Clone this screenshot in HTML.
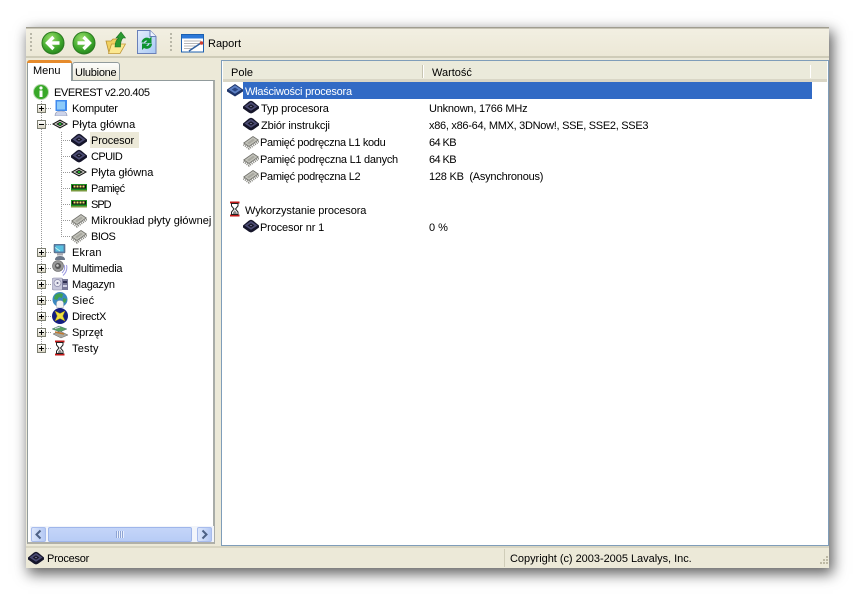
<!DOCTYPE html>
<html><head><meta charset="utf-8">
<style>
html,body{margin:0;padding:0;background:#fff;width:855px;height:594px;overflow:hidden}
body{position:relative;font:11px "Liberation Sans",sans-serif;color:#000}
div,span,svg{position:absolute;box-sizing:border-box}
#win{left:26px;top:27px;width:803px;height:541px;background:#ece9d8;box-shadow:3px 5px 13px 1px rgba(0,0,0,.62)}
.t{white-space:nowrap;line-height:14px;height:14px;margin-top:1px}
.g{width:2px;height:20px;background:repeating-linear-gradient(#b9b7a8 0 2px,transparent 2px 4px)}
.pm{width:9px;height:9px;border:1px solid #7b7d70;background:linear-gradient(#fff,#d9d5c4)}
.pm:before{content:"";position:absolute;left:1px;top:3px;width:5px;height:1px;background:#000}
.pm.p:after{content:"";position:absolute;left:3px;top:1px;width:1px;height:5px;background:#000}
.v{width:1px;background:repeating-linear-gradient(#999 0 1px,transparent 1px 2px)}
.h{height:1px;background:repeating-linear-gradient(90deg,#999 0 1px,transparent 1px 2px)}
</style></head><body>
<svg width="0" height="0" style="left:0;top:0">
<defs>
<radialGradient id="gr" cx=".4" cy=".3" r=".8"><stop offset="0" stop-color="#9ade6a"/><stop offset=".6" stop-color="#3fa82c"/><stop offset="1" stop-color="#1d7a18"/></radialGradient>
<linearGradient id="docg" x1="0" y1="0" x2="1" y2="1"><stop offset="0" stop-color="#e4eefc"/><stop offset="1" stop-color="#a8c8f4"/></linearGradient>
<symbol id="cpu" viewBox="0 0 16 16"><path d="M0 6.500L6 1.500L8 .800L10 1.500L16 6.500V8.500L10 12.800L8 13.500L6 12.800L0 8.500Z" fill="#15152a"/><path d="M1.500 6.500L8 2L14.500 6.500L8 10.800Z" fill="#4a4a72"/><path d="M4.500 6.500L8 4.200L11.500 6.500L8 8.800Z" fill="#181828"/><path d="M6.800 6.500L8 5.800L9.200 6.500L8 7.200Z" fill="#7c7ca4"/></symbol>
<symbol id="cpub" viewBox="0 0 16 16"><path d="M0 6.500L8 1L16 6.500V8.500L8 13.500L0 8.500Z" fill="#1e3468"/><path d="M1.500 6.500L8 2.300L14.500 6.500L8 10.800Z" fill="#5c80c4"/><path d="M4.800 6.500L8 4.500L11.200 6.500L8 8.600Z" fill="#2a4684"/></symbol>
<symbol id="mb" viewBox="0 0 16 16"><path d="M0 8L8 3.500L16 8L8 12.500Z" fill="#111"/><path d="M2 8L8 4.700L14 8L8 11.300Z" fill="#d8d8d0"/><path d="M4 8L8 5.800L12 8L8 10.200Z" fill="#222"/><path d="M6.300 8L8 7L9.700 8L8 9.100Z" fill="#20e030"/></symbol>
<symbol id="ram" viewBox="0 0 16 16"><rect x="0" y="2" width="16" height="6" fill="#1d9022"/><rect x="1" y="3" width="14" height="3.500" fill="#0e0e0e"/><path d="M2.500 3.500h2v2h-2zM5.500 3.500h2v2h-2zM8.500 3.500h2v2h-2zM11.500 3.500h2v2h-2z" fill="#f0e070"/><rect x="0" y="8" width="16" height="1.500" fill="#7a9a40"/></symbol>
<symbol id="ic" viewBox="0 0 16 16"><path d="M.5 9.500L6 13.500L16 6.500" fill="none" stroke="#85857e" stroke-width="2.200" stroke-dasharray="1 1"/><path d="M0 8L10 1L16 5L6 12Z" fill="#6e6e68"/><path d="M1.500 8L10 2L14.500 5L6 11Z" fill="#c2c2ba"/><path d="M4 8L10 3.800L12 5L6 9.300Z" fill="#a8a8a0"/></symbol>
<symbol id="hg" viewBox="0 0 16 16"><path d="M3 1.500H12.500M3 14.500H12.500" stroke="#c01818" stroke-width="2"/><path d="M4.500 2.500V5L7 8L4.500 11V13.500H11V11L8.500 8L11 5V2.500Z" fill="#fff" stroke="#222"/><path d="M5.800 12L7.800 9.300L9.800 12V13H5.800Z" fill="#888"/></symbol>
<symbol id="pc" viewBox="0 0 16 16"><path d="M3.500 0H15V11H3.500Z" fill="#3f8aee"/><path d="M5 1.500H13V9.500H5Z" fill="#8ccaf9"/><path d="M3 16Q3 11 9 11Q15 11 15 16Z" fill="#cdd4ea" stroke="#8890aa" stroke-width=".6"/></symbol>
<symbol id="mon" viewBox="0 0 16 16"><rect x="2" y="0" width="11" height="9" rx="1" fill="#5a7ea8" stroke="#506070" stroke-width=".6"/><rect x="3.500" y="1.500" width="8" height="6" fill="#58c0e0"/><path d="M3 3.500L8 7" stroke="#c0f0f0" stroke-width="1"/><rect x="5" y="9.500" width="6" height="2" fill="#a8a8b0"/><path d="M3 16Q3 12 8 12Q13 12 13 16Z" fill="#6a7688"/></symbol>
<symbol id="spk" viewBox="0 0 16 16"><circle cx="6" cy="6" r="5.500" fill="#989898" stroke="#666" stroke-width=".6"/><circle cx="6" cy="6" r="3" fill="#555"/><circle cx="5.500" cy="5.500" r="1.300" fill="#c8c8c8"/><path d="M12 5Q14 9 10 13M14.500 5Q16 11 11 15.500" fill="none" stroke="#9a98e0" stroke-width="1"/></symbol>
<symbol id="hdd" viewBox="0 0 16 16"><rect x="0" y="2" width="11" height="12" rx="2" fill="#c8c8dc" stroke="#8080a0" stroke-width=".6"/><circle cx="5.500" cy="7" r="3.500" fill="#e8e8f2" stroke="#8888a8" stroke-width=".7"/><circle cx="5.500" cy="7" r="1" fill="#66668a"/><rect x="10" y="3" width="6" height="11" fill="#7a7a9a"/><rect x="11" y="5" width="4" height="2" fill="#303050"/><rect x="11" y="9" width="4" height="2" fill="#d0d0e4"/></symbol>
<symbol id="net" viewBox="0 0 16 16"><circle cx="8" cy="7.500" r="7.500" fill="#3a88c0"/><path d="M3 3Q7 0 11 2L10 6L7 5L5 8L2 7ZM11 6L15 7L13 11L11 10Z" fill="#40a050"/><path d="M4.500 15.500V11.500Q4.500 8.500 8 8.500Q11.500 8.500 11.500 11.500V15.500Q8 16.500 4.500 15.500Z" fill="#f4f4f4" stroke="#a0a8b4" stroke-width=".5"/></symbol>
<symbol id="dx" viewBox="0 0 16 16"><circle cx="8" cy="8" r="8" fill="#141e80"/><path d="M3 3L8 5.500L13 3L10.800 8L13 13L8 10.500L3 13L5.200 8Z" fill="#f0e040" stroke="#a09010" stroke-width=".5"/></symbol>
<symbol id="hw" viewBox="0 0 16 16"><path d="M0 5L7 2L15 5L8 8Z" fill="#58a060" stroke="#467" stroke-width=".4"/><path d="M1 10L8 7L16 11L9 14Z" fill="#a8a8a0" stroke="#666" stroke-width=".5"/><path d="M3 8L12 10" stroke="#c07830" stroke-width="1.500"/><path d="M3 4.500L8 3" stroke="#dde" stroke-width="1"/></symbol>
<symbol id="info" viewBox="0 0 16 16"><circle cx="8" cy="8" r="7.500" fill="#38a828" stroke="#b8d8b0" stroke-width="1"/><circle cx="8" cy="4" r="1.600" fill="#fff"/><rect x="6.500" y="6.500" width="3" height="6.500" fill="#fff"/></symbol>
</defs>
</svg>

<div id="win"></div>
<!-- toolbar -->
<div style="left:26px;top:27px;width:803px;height:1px;background:#a09d90"></div>
<div style="left:26px;top:28px;width:803px;height:1px;background:#c8c5b6"></div>
<div style="left:26px;top:29px;width:803px;height:28px;background:linear-gradient(#f2efe2,#ece8d6)"></div>
<div style="left:26px;top:56px;width:803px;height:2px;background:#cfccb8"></div>
<div class="g" style="left:30px;top:33px"></div>
<svg style="left:41px;top:31px" width="24" height="24" viewBox="0 0 24 24"><circle cx="12" cy="12" r="11" fill="url(#gr)" stroke="#2c7a20"/><path d="M18.500 12H7M12.500 6L6.500 12L12.500 18" fill="none" stroke="#fff" stroke-width="3.400"/></svg>
<svg style="left:72px;top:31px" width="24" height="24" viewBox="0 0 24 24"><circle cx="12" cy="12" r="11" fill="url(#gr)" stroke="#2c7a20"/><path d="M5.500 12H17M11.500 6L17.500 12L11.500 18" fill="none" stroke="#fff" stroke-width="3.400"/></svg>
<svg style="left:105px;top:30px" width="21" height="25" viewBox="0 0 21 25"><path d="M1 11H6L8 9H15V23H4Z" fill="#f0d060" stroke="#b89030" stroke-width=".8"/><path d="M3.500 23.500L6.500 14H20.500L15 23.500Z" fill="#fce890" stroke="#c09838" stroke-width=".8"/><path d="M10 17Q10 10 14 8H11L16 2L20.500 8H18Q15.500 10 15.500 17Z" fill="#2c9a30" stroke="#1e7024" stroke-width=".6"/></svg>
<svg style="left:137px;top:30px" width="20" height="25" viewBox="0 0 20 25"><path d="M.5 .5H13L19 6.500V23.500H.5Z" fill="url(#docg)" stroke="#6a80b8"/><path d="M13 .5V6.500H19" fill="#eef4ff" stroke="#6a80b8"/><path d="M4.500 12.500A5.200 5.200 0 0 1 12.500 8.500L14.500 6.500V13H8L10.300 10.700A2.500 2.500 0 0 0 7 12.500Z" fill="#0e9430"/><path d="M15 13.500A5.200 5.200 0 0 1 7 18L5 20V13.500H11.500L9.200 15.800A2.500 2.500 0 0 0 12.500 13.500Z" fill="#0e9430"/></svg>
<div class="g" style="left:170px;top:33px"></div>
<svg style="left:181px;top:34px" width="24" height="19" viewBox="0 0 24 19"><rect x=".5" y=".5" width="22" height="17.500" fill="#fff" stroke="#1c60b0"/><rect x="1" y="1" width="21" height="3.500" fill="#2c78d8"/><path d="M3 7H20M3 9.500H20M3 12H15M3 14.500H11" stroke="#a0a0a0" stroke-width=".8"/><path d="M8 17L20 9" stroke="#3060a0" stroke-width="1.500"/><circle cx="20.500" cy="9" r="1.800" fill="#d04030"/></svg>
<div class="t" style="left:208px;top:36px">Raport</div>

<!-- left panel -->
<div style="left:27px;top:80px;width:188px;height:464px;background:#fff;border:1px solid #919b9c;border-right:2px solid #a8aca8;border-bottom:2px solid #b0b0a8"></div>
<div style="left:72px;top:62px;width:48px;height:19px;background:linear-gradient(#fdfdfb,#ece9d8);border:1px solid #919b9c;border-radius:3px 3px 0 0"></div>
<div class="t" style="left:75px;top:65px;letter-spacing:-.25px">Ulubione</div>
<div style="left:27px;top:60px;width:45px;height:21px;background:#fff;border:1px solid #919b9c;border-top:none;border-bottom:none;border-radius:3px 3px 0 0"></div>
<div style="left:27px;top:60px;width:45px;height:3px;background:#e68b2c;border-radius:3px 3px 0 0"></div>
<div class="t" style="left:33px;top:63px">Menu</div>

<!-- tree lines -->
<div class="v" style="left:41px;top:99px;height:250px"></div>
<div class="v" style="left:61px;top:132px;height:104px"></div>
<div class="h" style="left:46px;top:108px;width:6px"></div>
<div class="h" style="left:46px;top:124px;width:6px"></div>
<div class="h" style="left:61px;top:140px;width:9px"></div>
<div class="h" style="left:61px;top:156px;width:9px"></div>
<div class="h" style="left:61px;top:172px;width:9px"></div>
<div class="h" style="left:61px;top:188px;width:9px"></div>
<div class="h" style="left:61px;top:204px;width:9px"></div>
<div class="h" style="left:61px;top:220px;width:9px"></div>
<div class="h" style="left:61px;top:236px;width:9px"></div>
<div class="h" style="left:46px;top:252px;width:6px"></div>
<div class="h" style="left:46px;top:268px;width:6px"></div>
<div class="h" style="left:46px;top:284px;width:6px"></div>
<div class="h" style="left:46px;top:300px;width:6px"></div>
<div class="h" style="left:46px;top:316px;width:6px"></div>
<div class="h" style="left:46px;top:332px;width:6px"></div>
<div class="h" style="left:46px;top:348px;width:6px"></div>

<div class="pm p" style="left:37px;top:104px"></div>
<div class="pm" style="left:37px;top:120px"></div>
<div class="pm p" style="left:37px;top:248px"></div>
<div class="pm p" style="left:37px;top:264px"></div>
<div class="pm p" style="left:37px;top:280px"></div>
<div class="pm p" style="left:37px;top:296px"></div>
<div class="pm p" style="left:37px;top:312px"></div>
<div class="pm p" style="left:37px;top:328px"></div>
<div class="pm p" style="left:37px;top:344px"></div>

<svg style="left:33px;top:84px" width="16" height="16"><use href="#info"/></svg>
<div class="t" style="left:54px;top:85px;letter-spacing:-.41px">EVEREST v2.20.405</div>
<svg style="left:52px;top:100px" width="16" height="16"><use href="#pc"/></svg>
<div class="t" style="left:72px;top:101px;letter-spacing:-.25px">Komputer</div>
<svg style="left:52px;top:116px" width="16" height="16"><use href="#mb"/></svg>
<div class="t" style="left:72px;top:117px;letter-spacing:.08px">Płyta główna</div>
<div style="left:90px;top:132px;width:49px;height:16px;background:#ece9d8"></div>
<svg style="left:71px;top:133px" width="16" height="16"><use href="#cpu"/></svg>
<div class="t" style="left:91px;top:133px;letter-spacing:-.12px">Procesor</div>
<svg style="left:71px;top:149px" width="16" height="16"><use href="#cpu"/></svg>
<div class="t" style="left:91px;top:149px;letter-spacing:-.6px">CPUID</div>
<svg style="left:71px;top:164px" width="16" height="16"><use href="#mb"/></svg>
<div class="t" style="left:91px;top:165px">Płyta główna</div>
<svg style="left:71px;top:182px" width="16" height="16"><use href="#ram"/></svg>
<div class="t" style="left:91px;top:181px;letter-spacing:-.5px">Pamięć</div>
<svg style="left:71px;top:198px" width="16" height="16"><use href="#ram"/></svg>
<div class="t" style="left:91px;top:197px;letter-spacing:-1px">SPD</div>
<svg style="left:71px;top:213px" width="16" height="16"><use href="#ic"/></svg>
<div class="t" style="left:91px;top:213px;letter-spacing:.05px">Mikroukład płyty głównej</div>
<svg style="left:71px;top:229px" width="16" height="16"><use href="#ic"/></svg>
<div class="t" style="left:91px;top:229px;letter-spacing:-.5px">BIOS</div>
<svg style="left:52px;top:244px" width="16" height="16"><use href="#mon"/></svg>
<div class="t" style="left:72px;top:245px;letter-spacing:.2px">Ekran</div>
<svg style="left:52px;top:260px" width="16" height="16"><use href="#spk"/></svg>
<div class="t" style="left:72px;top:261px;letter-spacing:-.3px">Multimedia</div>
<svg style="left:52px;top:276px" width="16" height="16"><use href="#hdd"/></svg>
<div class="t" style="left:72px;top:277px;letter-spacing:-.28px">Magazyn</div>
<svg style="left:52px;top:292px" width="16" height="16"><use href="#net"/></svg>
<div class="t" style="left:72px;top:293px;letter-spacing:.25px">Sieć</div>
<svg style="left:52px;top:308px" width="16" height="16"><use href="#dx"/></svg>
<div class="t" style="left:72px;top:309px;letter-spacing:-.28px">DirectX</div>
<svg style="left:52px;top:324px" width="16" height="16"><use href="#hw"/></svg>
<div class="t" style="left:72px;top:325px;letter-spacing:-.16px">Sprzęt</div>
<svg style="left:52px;top:340px" width="16" height="16"><use href="#hg"/></svg>
<div class="t" style="left:72px;top:341px;letter-spacing:.2px">Testy</div>

<!-- scrollbar -->
<div style="left:30px;top:526px;width:184px;height:16px;background:#f2f5fb"></div>
<div style="left:31px;top:527px;width:15px;height:15px;background:linear-gradient(90deg,#dce6fb,#b4c9f4);border:1px solid #a8bcec;border-radius:2px"></div>
<svg style="left:31px;top:527px" width="15" height="15"><path d="M9.500 3.500L5.500 7.500L9.500 11.500" fill="none" stroke="#4d6185" stroke-width="2"/></svg>
<div style="left:48px;top:527px;width:144px;height:15px;background:linear-gradient(#c4d5f8,#b8ccf6);border:1px solid #9fb6ea;border-radius:2px"></div>
<div style="left:116px;top:531px;width:8px;height:7px;background:repeating-linear-gradient(90deg,#8ea4d4 0 1px,#e8effd 1px 2px)"></div>
<div style="left:197px;top:527px;width:15px;height:15px;background:linear-gradient(90deg,#dce6fb,#b4c9f4);border:1px solid #a8bcec;border-radius:2px"></div>
<svg style="left:197px;top:527px" width="15" height="15"><path d="M5.500 3.500L9.500 7.500L5.500 11.500" fill="none" stroke="#4d6185" stroke-width="2"/></svg>

<!-- right panel -->
<div style="left:221px;top:60px;width:608px;height:486px;background:#fff;border:1px solid #7f9db9"></div>
<div style="left:223px;top:61px;width:604px;height:21px;background:#ebeadb;border-bottom:3px solid #d9d6c6"></div>
<div style="left:422px;top:65px;width:1px;height:13px;background:#c8c5b2"></div>
<div style="left:423px;top:65px;width:1px;height:13px;background:#fff"></div>
<div style="left:810px;top:65px;width:1px;height:13px;background:#fff"></div>
<div class="t" style="left:231px;top:65px">Pole</div>
<div class="t" style="left:432px;top:65px">Wartość</div>
<div style="left:243px;top:82px;width:569px;height:17px;background:#316ac5"></div>
<svg style="left:227px;top:83px" width="16" height="16"><use href="#cpub"/></svg>
<div class="t" style="left:245px;top:84px;color:#fff;letter-spacing:-.24px">Właściwości procesora</div>
<svg style="left:243px;top:100px" width="16" height="16"><use href="#cpu"/></svg>
<div class="t" style="left:261px;top:101px;letter-spacing:-.15px">Typ procesora</div>
<div class="t" style="left:429px;top:101px;letter-spacing:-.22px">Unknown, 1766 MHz</div>
<svg style="left:243px;top:117px" width="16" height="16"><use href="#cpu"/></svg>
<div class="t" style="left:261px;top:118px;letter-spacing:-.13px">Zbiór instrukcji</div>
<div class="t" style="left:429px;top:118px;letter-spacing:-.29px">x86, x86-64, MMX, 3DNow!, SSE, SSE2, SSE3</div>
<svg style="left:243px;top:135px" width="16" height="16"><use href="#ic"/></svg>
<div class="t" style="left:260px;top:135px;letter-spacing:-.33px">Pamięć podręczna L1 kodu</div>
<div class="t" style="left:429px;top:135px;letter-spacing:-.6px">64 KB</div>
<svg style="left:243px;top:152px" width="16" height="16"><use href="#ic"/></svg>
<div class="t" style="left:260px;top:152px;letter-spacing:-.27px">Pamięć podręczna L1 danych</div>
<div class="t" style="left:429px;top:152px;letter-spacing:-.6px">64 KB</div>
<svg style="left:243px;top:169px" width="16" height="16"><use href="#ic"/></svg>
<div class="t" style="left:260px;top:169px;letter-spacing:-.32px">Pamięć podręczna L2</div>
<div class="t" style="left:429px;top:169px;white-space:pre;letter-spacing:-.23px">128 KB  (Asynchronous)</div>
<svg style="left:227px;top:201px" width="16" height="16"><use href="#hg"/></svg>
<div class="t" style="left:245px;top:203px;letter-spacing:-.09px">Wykorzystanie procesora</div>
<svg style="left:243px;top:219px" width="16" height="16"><use href="#cpu"/></svg>
<div class="t" style="left:260px;top:220px;letter-spacing:-.15px">Procesor nr 1</div>
<div class="t" style="left:429px;top:220px">0 %</div>

<!-- status bar -->
<div style="left:26px;top:546px;width:803px;height:22px;background:#ece9d8;border-top:2px solid #d8d5c2"></div>
<div style="left:504px;top:549px;width:1px;height:18px;background:#d0cdb9"></div>
<svg style="left:28px;top:551px" width="16" height="16"><use href="#cpu"/></svg>
<div class="t" style="left:47px;top:551px;letter-spacing:-.25px">Procesor</div>
<div class="t" style="left:510px;top:551px;letter-spacing:-.03px">Copyright (c) 2003-2005 Lavalys, Inc.</div>
<svg style="left:817px;top:556px" width="12" height="12"><path d="M9 0h2v2H9zM6 3h2v2H6zM9 3h2v2H9zM3 6h2v2H3zM6 6h2v2H6zM9 6h2v2H9z" fill="#bdb9a4"/></svg>
</body></html>
